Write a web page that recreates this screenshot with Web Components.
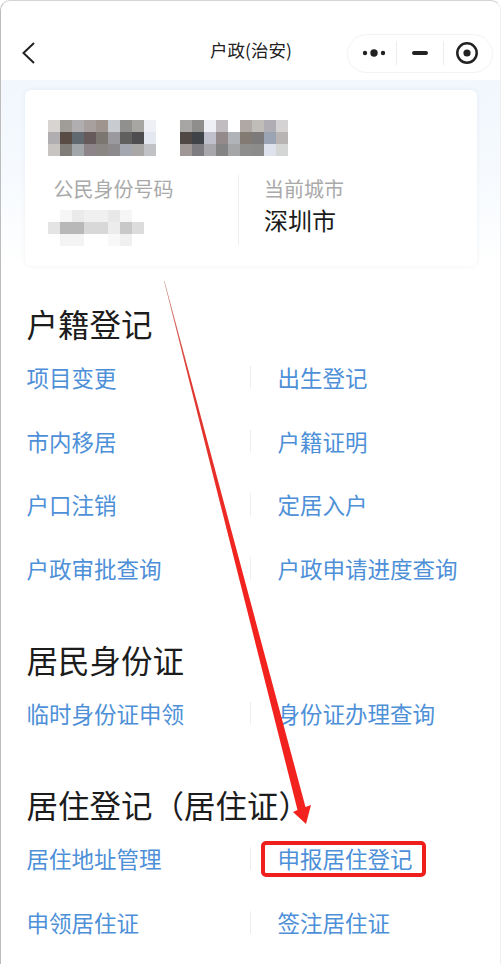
<!DOCTYPE html>
<html lang="zh"><head><meta charset="utf-8">
<style>
html,body{margin:0;background:#fff}
body{font-family:"Noto Sans CJK SC","Noto Sans",sans-serif}
</style></head>
<body>
<x-app>
  <x-nav title="户政(治安)"></x-nav>
  <x-hero>
    <x-card></x-card>
  </x-hero>
  <x-section style="--gap:35px;--row:63.700px" heading="户籍登记" items="项目变更,出生登记,市内移居,户籍证明,户口注销,定居入户,户政审批查询,户政申请进度查询"></x-section>
  <x-section style="--gap:36px;--row:64px" heading="居民身份证" items="临时身份证申领,身份证办理查询"></x-section>
  <x-section style="--gap:36px;--row:64px" heading="居住登记（居住证）" items="居住地址管理,申报居住登记,申领居住证,签注居住证"></x-section>
  <x-annotation></x-annotation>
</x-app>
<script>
function def(name,html,init){
  customElements.define(name,class extends HTMLElement{
    connectedCallback(){
      if(this.shadowRoot)return;
      const r=this.attachShadow({mode:'open'});
      r.innerHTML=typeof html==='function'?html(this):html;
      if(init)init(r,this);
    }
  });
}
def('x-app',`<style>
:host{display:block;position:relative;width:501px;height:964px;overflow:hidden;box-sizing:border-box;background:#fff;
border-left:1.5px solid #bdbdbd;border-top:1px solid #d4d4d4;border-right:1px solid #efefef;border-radius:10px 10px 0 0;color:#1c1c1c}
</style><slot></slot>`);
def('x-nav',h=>`<style>
:host{display:flex;align-items:center;height:79px;position:relative;box-sizing:border-box;padding:0 7px 0 20px}
.title{position:absolute;left:1px;right:0;text-align:center;font-size:17.5px;line-height:26px;color:#222;top:36px}
.back{display:block;margin-top:25px;position:relative}
.cap{margin-left:auto;margin-top:25px;display:flex;align-items:center;width:146px;height:39px;box-sizing:border-box;border:1px solid #f3f3f3;border-radius:20px;position:relative}
.cell{display:flex;align-items:center;justify-content:center;height:100%;box-sizing:border-box}
.c1{width:48px;padding-left:4px}.c2{width:47px}.c3{width:48px;padding-right:2px}
.sep{width:1px;height:24px;background:#ececec;flex:none}
</style>
<svg class="back" width="18" height="24" viewBox="0 0 18 24"><path d="M13 2 L2.500 12 L13 22" fill="none" stroke="#222" stroke-width="2"/></svg>
<span class="title">${h.getAttribute('title')}</span>
<div class="cap">
  <span class="cell c1"><svg width="24" height="10" viewBox="0 0 24 10"><circle cx="3" cy="5" r="2.200" fill="#222"/><circle cx="12" cy="5" r="3.700" fill="#222"/><circle cx="21" cy="5" r="2.200" fill="#222"/></svg></span>
  <span class="sep"></span>
  <span class="cell c2"><svg width="18" height="6" viewBox="0 0 18 6"><rect x="1" y="1" width="16" height="4" rx="2" fill="#222"/></svg></span>
  <span class="sep"></span>
  <span class="cell c3"><svg width="24" height="24" viewBox="0 0 24 24"><circle cx="12" cy="12" r="9.700" fill="none" stroke="#222" stroke-width="2.500"/><circle cx="12" cy="12" r="3.600" fill="#222"/></svg></span>
</div>`);
def('x-hero',`<style>
:host{display:block;box-sizing:border-box;padding:10px 23px 0 24px;height:186px;background:linear-gradient(180deg,#f1f7fd 0,#f6fafe 50%,#fff 100%)}
</style><slot></slot>`);
def('x-mosaic',h=>{
  const rows=h.getAttribute('cells').split('|').map(r=>r.split(','));
  const cols=rows[0].length;
  return `<style>:host{display:inline-grid;grid-template-columns:repeat(${cols},12px);grid-auto-rows:12px}</style>`+
    rows.flat().map(c=>`<i style="background:${c}"></i>`).join('');
});
def('x-card',`<style>
:host{display:block;box-sizing:border-box;height:176px;background:#fff;border-radius:6px;box-shadow:0 0 4px rgba(150,170,190,.16);padding:30px 22px 0 22.500px}
.name{display:flex;gap:24px;height:36px}
.info{display:flex;margin-top:19px}
.left{width:191px;height:70px;box-sizing:border-box;border-right:1px solid #eeeeee}
.right{padding-left:25.500px}
.label{font-size:20px;line-height:28px;color:#a9a9a9}
.left .label{padding-left:6px}
.id{margin-top:1px}
.value{font-size:24px;line-height:36px;color:#1c1c1c;margin-top:-1px}
</style>
<div class="name">
<x-mosaic cells="#d8d4d2,#a09c98,#b0aeb0,#a8a09e,#a0948e,#c8cbd0,#90908f,#a8a6a2,#eef0f5|#b0aeb0,#584c44,#606870,#665a5c,#7c7670,#9a9a9e,#60605f,#4e4e50,#e4e8f0|#c8c4c2,#807c78,#a0a6aa,#8c8488,#8a8684,#8c8a8c,#a4a6b0,#aaa8a6,#c0c2c6"></x-mosaic>
<x-mosaic cells="#a8a6a4,#908e8c,#eef0f5,#c0bcc0,#ffffff,#b0a8a4,#c0bcb8,#b0aeb4,#d4d2d2|#504844,#404448,#c0c0cc,#948a8c,#b0b4b8,#847a74,#7c7a7a,#9aa4b4,#b8b4b4|#a09896,#7e7c80,#a8a8ac,#848484,#a4a6a8,#8e8e8c,#8c8c8a,#dde2ec,#d4d6d6"></x-mosaic>
</div>
<div class="info">
 <div class="left"><div class="label">公民身份号码</div>
 <x-mosaic class="id" cells="#ffffff,#f6f6f6,#eaeaea,#f0f0f0,#f0f0f0,#e8e8e8,#f6f6f6,#ffffff|#e4e4e4,#b8b8b8,#b8b8b8,#d8d8d8,#d8d8d8,#ececec,#c8c8c8,#dcdcdc|#ffffff,#f4f4f4,#f4f4f4,#ffffff,#ffffff,#f8f8f8,#f0f0f0,#ffffff"></x-mosaic></div>
 <div class="right"><div class="label">当前城市</div><div class="value">深圳市</div></div>
</div>`);
def('x-section',h=>{
  const items=h.getAttribute('items').split(',');
  return `<style>
:host{display:block;padding:0 0 1px 25.500px;margin-top:var(--gap,36px)}
h2{margin:0;font-weight:400;font-size:31.500px;line-height:44px;color:#1c1c1c;white-space:nowrap}
.grid{display:grid;grid-template-columns:223.500px 1fr;grid-auto-rows:var(--row,64px)}
.item{display:flex;align-items:center;font-size:22.500px;color:#4e90d8;white-space:nowrap;position:relative}
.item:nth-child(even){padding-left:27.500px}
.item:nth-child(even)::before{content:"";position:absolute;left:0;top:21px;height:23px;width:1px;background:#eeeeee}
</style><h2>${h.getAttribute('heading')}</h2><div class="grid">${items.map(t=>`<div class="item">${t}</div>`).join('')}</div>`;
});
def('x-annotation',`<style>
:host{display:block;position:absolute;left:-1.500px;top:-1px;width:501px;height:964px;pointer-events:none}
svg{display:block}
</style>
<svg width="501" height="964" viewBox="0 0 501 964">
<defs><linearGradient id="g" x1="0" y1="281" x2="0" y2="560" gradientUnits="userSpaceOnUse"><stop offset="0" stop-color="#c98a80"/><stop offset=".35" stop-color="#dd3a32"/><stop offset="1" stop-color="#f2231f"/></linearGradient></defs>
<polygon points="164,281 164.500,281 305.500,807 311,805 306,824 293,812 297.500,810" fill="url(#g)"/>
<rect x="263" y="843" width="161" height="32" rx="3" fill="none" stroke="#ee1f1c" stroke-width="4"/>
</svg>`);
</script>
</body></html>
